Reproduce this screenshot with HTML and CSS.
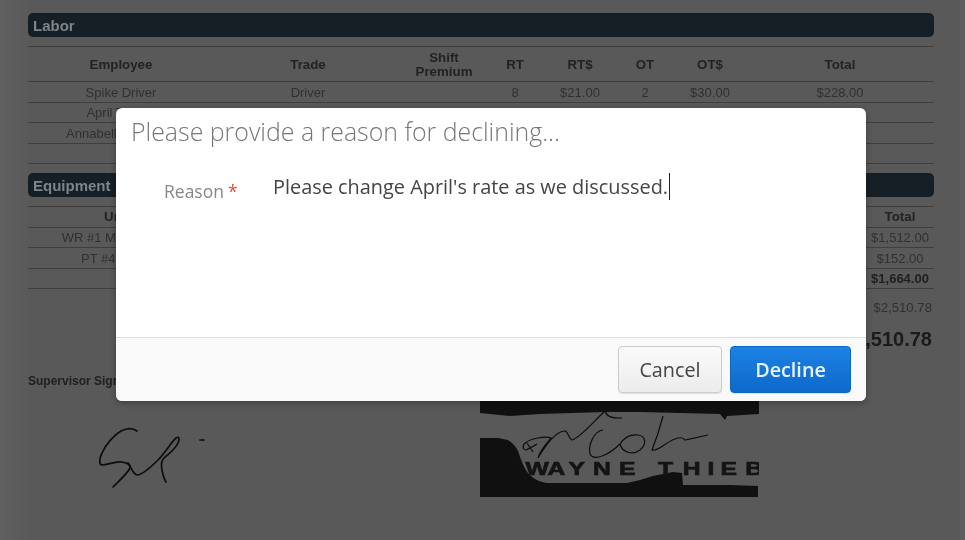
FILE: index.html
```html
<!DOCTYPE html>
<html lang="en">
<head>
<meta charset="utf-8">
<title>Decline timesheet</title>
<link rel="stylesheet" href="styles.css">
</head>
<body>
<main class="doc">
  <h2 class="bar">Labor</h2>
  <div class="rule first"></div>
  <div class="row labor head tall"><span>Employee</span><span>Trade</span><span>Shift<br>Premium</span><span>RT</span><span>RT$</span><span>OT</span><span>OT$</span><span>Total</span></div>
  <div class="row labor"><span>Spike Driver</span><span>Driver</span><span></span><span>8</span><span>$21.00</span><span>2</span><span>$30.00</span><span>$228.00</span></div>
  <div class="row labor"><span>April Tanner</span><span>Driver</span><span></span><span>8</span><span>$21.00</span><span></span><span>$30.00</span><span>$168.00</span></div>
  <div class="row labor"><span>Annabelle Williams</span><span>Driver</span><span></span><span>8</span><span>$21.00</span><span></span><span>$30.00</span><span>$168.00</span></div>
  <div class="row labor"></div>
  <h2 class="bar second">Equipment</h2>
  <div class="rule first"></div>
  <div class="row equip head"><span>Unit</span><span></span><span>Total</span></div>
  <div class="row equip"><span>WR #1 Mixer Truck</span><span></span><span>$1,512.00</span></div>
  <div class="row equip"><span>PT #4 Pump</span><span></span><span>$152.00</span></div>
  <div class="row equip strong"><span></span><span></span><span>$1,664.00</span></div>
  <p class="sum">$2,510.78</p>
  <p class="grand">$2,510.78</p>
  <div class="sigs">
    <div class="sig-left">
      <h3>Supervisor Signature</h3>
      <svg class="sign-a" viewBox="0 0 120 75">
        <path d="M47 11C43 8 37 8 31 11C24 15 16 24 12 33C9 39 9 45 12 45C18 45 24 41 32 42C38 43 41 45 40 48C37 54 30 60 23 67" />
        <path d="M38 43C41 48 44 55 47 55C51 55 60 48 68 40C75 33 82 21 86 18C89 16 90 18 88 23C85 30 78 34 74 38C71 41 71 45 72 50C73 55 74 59 76 62" />
        <path d="M110 20H114" />
      </svg>
    </div>
    <div class="stamp">
      <svg viewBox="0 0 279 97">
        <path class="ink" d="M0 0H279V14L247 16L245 20L240 14L160 12L125 12L60 14L30 16L0 13Z" />
        <path class="ink" d="M0 38L18 38L28 40C33 43 36 47 38 51C41 60 44 68 48 73C53 79 60 82 67 83L147 83L160 80L173 76L193 72L202 73L203 85L233 85L250 85L278 86V97H0Z" />
        <text class="stamp-text" transform="scale(1.3 1)" y="75" x="35 52 68 87 107 120 137 156 175 185 204">WAYNE THIEB</text>
        <path class="pen" d="M125 11C115 20 100 38 92 40C88 38 88 30 84 31C74 33 66 45 58 58C60 50 68 42 71 38C66 36 50 38 44 44C42 48 44 50 46 50C50 48 54 46 57 44M47 43L53 52M125 11C127 18 134 18 142 18" />
        <path class="pen" d="M123 30C114 31 108 45 110 54C114 62 130 54 140 44C144 38 150 34 158 35C166 36 167 44 160 50C152 56 142 52 140 44" />
        <path class="pen" d="M183 16C180 28 176 40 172 50C178 52 186 42 195 39C200 37 203 37 205 40L228 35" />
      </svg>
    </div>
  </div>
</main>
<section class="modal" role="dialog" aria-label="Decline">
  <h1>Please provide a reason for declining...</h1>
  <div class="field">
    <label>Reason<span class="req">*</span></label>
    <div class="input">Please change April's rate as we discussed.<span class="caret"></span></div>
  </div>
  <footer class="actions">
    <button class="btn">Cancel</button>
    <button class="btn primary">Decline</button>
  </footer>
</section>
</body>
</html>
```
FILE: styles.css
```css
* { box-sizing: border-box; }
html, body { margin: 0; height: 100%; overflow: hidden; }
body { background: #5e5e5e; font-family: "Liberation Sans", Arial, sans-serif; }
.doc { width: 960px; height: 540px; padding: 13px 26px 0 28px; color: #303030; font-size: 13px; background: linear-gradient(90deg, #606060, #595959 30px); filter: blur(.35px); }
.bar { margin: 0; height: 24px; line-height: 25px; padding-left: 5px; border-radius: 5px; background: #151f25; color: #7f8488; font-size: 15px; font-weight: bold; }
.bar.second { margin-top: 9px; }
.rule { height: 1px; background: #3e3e3e; margin-top: 9px; }
.row { display: grid; height: 20.5px; border-bottom: 1px solid #3e3e3e; align-items: center; text-align: center; line-height: 15px; color: #303030; padding-top: 1px; }
.labor { grid-template-columns: 186px 188px 84px 58px 72px 58px 72px 188px; }
.equip { grid-template-columns: 178px 1fr 68px; }
.row.tall { height: 35px; }
.head { font-weight: bold; font-size: 13.3px; line-height: 14px; color: #222; }
.strong { font-weight: bold; color: #202020; }
.sum { margin: 12px 2px 0 0; text-align: right; font-size: 13.2px; color: #303030; line-height: 14px; }
.grand { margin: 12px 2px 0 0; text-align: right; font-size: 20px; font-weight: bold; color: #1a1a1a; line-height: 24px; }
.sigs { display: flex; margin-top: 23px; }
.sig-left { width: 452px; }
.sig-left h3 { margin: 0; font-size: 12px; line-height: 14px; color: #202020; }
.sign-a { display: block; width: 120px; height: 75px; margin: 32px 0 0 62px; fill: none; stroke: #0d0d0d; stroke-width: 1.7; stroke-linecap: round; }
.stamp { width: 279px; height: 97px; margin-top: 26px; overflow: hidden; }
.stamp svg { display: block; width: 279px; height: 97px; }
.ink { fill: #101010; }
.pen { fill: none; stroke: #0d0d0d; stroke-width: 1.2; }
.stamp-text { font: bold 19px "Liberation Sans", Arial, sans-serif; fill: #141414; stroke: #141414; stroke-width: .7px; }
.modal { position: fixed; left: 116px; top: 108px; width: 750px; height: 293px; display: flex; flex-direction: column; background: #fff; border-radius: 6px; box-shadow: 0 2px 6px rgba(0,0,0,.3); font-family: "Open Sans", sans-serif; overflow: hidden; }
.modal h1 { margin: 0; padding: 5px 0 0 15px; font-size: 24.9px; line-height: 36px; font-weight: 300; color: #777; }
.field { flex: 1; display: flex; padding-top: 24px; }
.field label { width: 157px; padding: 5px 0 0 48px; font-size: 17.5px; line-height: 26px; color: #888; }
.req { color: #e74c3c; margin-left: 4px; }
.input { font-size: 19.9px; line-height: 28px; color: #444; }
.caret { display: inline-block; width: 1px; height: 27px; margin-left: 1px; background: #222; vertical-align: -6px; }
.actions { height: 64px; display: flex; justify-content: flex-end; gap: 8px; padding: 8px 15px 0 0; border-top: 1px solid #ddd; background: #f9f9f9; }
.btn { width: 104px; height: 47px; border: 1px solid #ccc; border-radius: 4px; background: linear-gradient(#fafafa, #ececec); font: 400 19.8px "Open Sans", sans-serif; color: #444; box-shadow: 0 1px 1px rgba(0,0,0,.1); }
.btn.primary { width: 121px; border-color: #0f66c0; background: linear-gradient(#1c82e4, #0f68cc); color: #e8f3ff; font-weight: 600; }
```
